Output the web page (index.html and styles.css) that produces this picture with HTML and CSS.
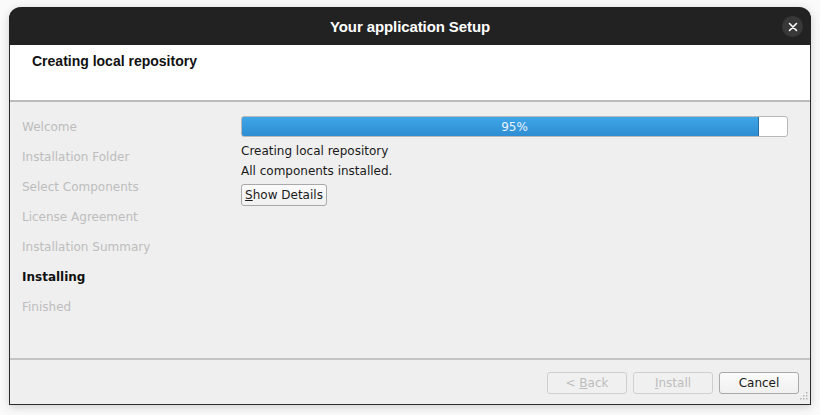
FILE: index.html
```html
<!DOCTYPE html>
<html>
<head>
<meta charset="utf-8">
<link rel="stylesheet" href="styles.css">
</head>
<body>
<div class="window">
  <div class="titlebar">
    <span class="title">Your application Setup</span>
    <span class="close">
      <svg width="10" height="10" viewBox="0 0 10 10"><path d="M1.5 1.5 L8.5 8.5 M8.5 1.5 L1.5 8.5" stroke="#fff" stroke-width="1.6" stroke-linecap="round"/></svg>
    </span>
  </div>
  <div class="header">
    <div class="header-title">Creating local repository</div>
  </div>
  <div class="body">
    <ul class="steps">
      <li>Welcome</li>
      <li>Installation Folder</li>
      <li>Select Components</li>
      <li>License Agreement</li>
      <li>Installation Summary</li>
      <li class="current">Installing</li>
      <li>Finished</li>
    </ul>
    <div class="content">
      <div class="progress">
        <div class="fill" style="width:95%"></div>
        <span class="pct">95%</span>
      </div>
      <div class="line first">Creating local repository</div>
      <div class="line">All components installed.</div>
      <button class="btn details"><u>S</u>how Details</button>
    </div>
  </div>
  <div class="footer">
    <button class="btn foot disabled">&lt; <u>B</u>ack</button>
    <button class="btn foot disabled"><u>I</u>nstall</button>
    <button class="btn foot">Cancel</button>
    <span class="grip">
      <svg width="10" height="10" viewBox="0 0 10 10" fill="#b8b8b8">
        <rect x="8" y="0" width="1.5" height="1.5"/>
        <rect x="5" y="3" width="1.5" height="1.5"/><rect x="8" y="3" width="1.5" height="1.5"/>
        <rect x="2" y="6" width="1.5" height="1.5"/><rect x="5" y="6" width="1.5" height="1.5"/><rect x="8" y="6" width="1.5" height="1.5"/>
      </svg>
    </span>
  </div>
</div>
</body>
</html>
```
FILE: styles.css
```css
html, body {
  margin: 0;
  padding: 0;
}
body {
  width: 820px;
  height: 415px;
  background: #fafafa;
  font-family: "DejaVu Sans", sans-serif;
  font-size: 12px;
  overflow: hidden;
  padding: 7px 0 0 9px;
  box-sizing: border-box;
}
.window {
  width: 802px;
  height: 398px;
  box-sizing: border-box;
  border: 1px solid #2c2c2c;
  border-top: none;
  border-radius: 12px 12px 0 0;
  background: #efefef;
  display: flex;
  flex-direction: column;
  box-shadow: 0 2px 10px rgba(0,0,0,0.18);
  position: relative;
}
.titlebar {
  height: 38px;
  margin: 0 -1px;
  background: #222222;
  border-radius: 12px 12px 0 0;
  display: flex;
  align-items: center;
  justify-content: center;
  position: relative;
  flex: none;
}
.title {
  color: #ffffff;
  font-family: "Liberation Sans", sans-serif;
  font-weight: bold;
  font-size: 15px;
  letter-spacing: -0.1px;
}
.close {
  position: absolute;
  right: 8px;
  top: 9px;
  width: 21px;
  height: 21px;
  border-radius: 50%;
  background: #383838;
  display: flex;
  align-items: center;
  justify-content: center;
}
.header {
  height: 57px;
  background: #ffffff;
  border-bottom: 2px solid #bcbcbc;
  padding: 8px 0 0 22px;
  box-sizing: border-box;
  flex: none;
}
.header-title {
  font-family: "Liberation Sans", sans-serif;
  font-weight: bold;
  font-size: 14px;
  color: #111;
}
.body {
  flex: 1;
  display: flex;
  border-bottom: 2px solid #c4c4c4;
}
.steps {
  list-style: none;
  margin: 0;
  padding: 17px 0 0 12px;
  width: 219px;
  box-sizing: border-box;
}
.steps li {
  height: 30px;
  line-height: 16px;
  color: #bdbdbd;
  font-size: 12px;
}
.steps li.current {
  color: #111;
  font-weight: bold;
}
.content {
  flex: 1;
  padding: 14px 22px 0 13px;
  display: flex;
  flex-direction: column;
  align-items: flex-start;
}
.progress {
  width: 547px;
  height: 21px;
  box-sizing: border-box;
  border: 1px solid #b8b8b8;
  border-radius: 3px;
  background: #ffffff;
  position: relative;
  overflow: hidden;
}
.fill {
  box-sizing: border-box;
  background: linear-gradient(#3ea6e8, #2f8dd2);
  border: 1px solid #2b6ea8;
  margin: -1px 0 0 -1px;
  height: 21px;
  border-radius: 3px 0 0 3px;
}
.pct {
  position: absolute;
  left: 0;
  right: 0;
  top: 0;
  bottom: 0;
  display: flex;
  align-items: center;
  justify-content: center;
  color: #eaf4fc;
  font-size: 12px;
}
.line {
  height: 20px;
  line-height: 18px;
  color: #1a1a1a;
  font-size: 12px;
}
.line.first {
  margin-top: 5px;
}
.btn {
  font-family: "DejaVu Sans", sans-serif;
  font-size: 12px;
  color: #1a1a1a;
  background: linear-gradient(#fbfbfb, #f0f0f0);
  border: 1px solid #a9a9a9;
  border-radius: 3px;
  padding: 0;
  height: 22px;
  box-sizing: border-box;
}
.details {
  margin-top: 2px;
  padding: 0 3px;
  width: 86px;
}
.footer {
  height: 44px;
  flex: none;
  display: flex;
  justify-content: flex-end;
  align-items: flex-start;
  gap: 6px;
  padding: 12px 11px 0 0;
  box-sizing: border-box;
  position: relative;
}
.foot {
  width: 80px;
}
.foot.disabled {
  color: #bdbdbd;
  border-color: #cfcfcf;
  background: #f0f0f0;
}
.grip {
  position: absolute;
  right: 2px;
  bottom: 2px;
  width: 10px;
  height: 10px;
  display: flex;
}
```
